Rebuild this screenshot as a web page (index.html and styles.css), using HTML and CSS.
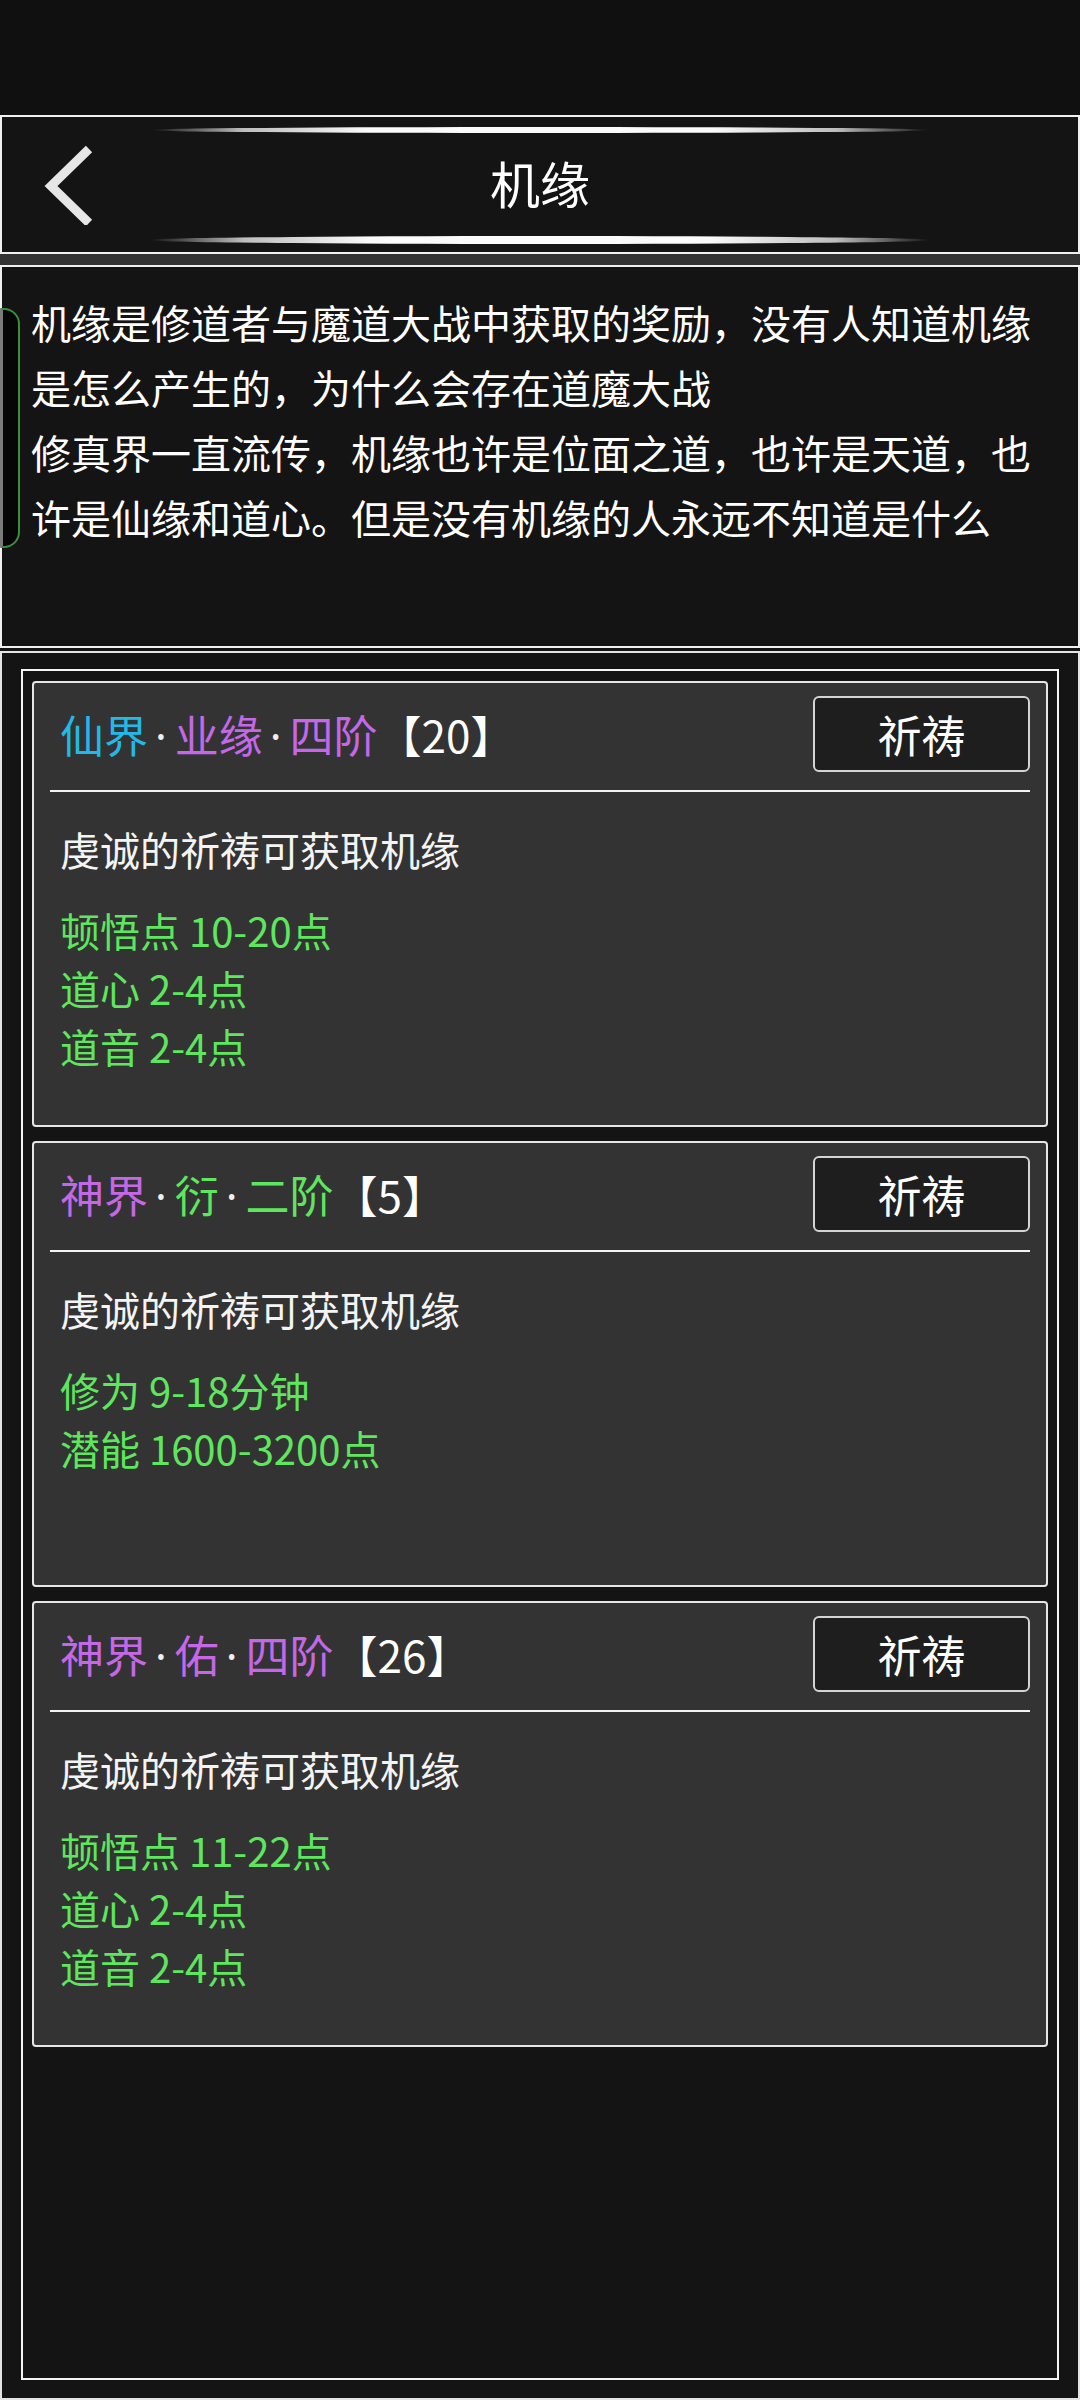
FILE: index.html
```html
<!DOCTYPE html>
<html lang="zh-CN">
<head>
    <meta charset="UTF-8">
    <meta name="viewport" content="width=device-width, initial-scale=1.0">
    <title>机缘</title>
    <link rel="stylesheet" href="styles.css">
</head>
<body>
    <div class="status-bar"></div>

    <header class="top-bar">
        <div class="glow glow-top"></div>
        <div class="bar-row">
            <svg class="back" width="56" height="80" viewBox="0 0 56 80">
                <polyline points="48,4 10,41 48,78" fill="none" stroke="#e6e6e6" stroke-width="9" stroke-linejoin="miter"/>
            </svg>
            <h1 class="bar-title">机缘</h1>
            <span></span>
        </div>
        <div class="glow glow-bottom"></div>
    </header>

    <div class="band"></div>

    <section class="intro">
        <span class="side-tab"></span>
        <p>机缘是修道者与魔道大战中获取的奖励，没有人知道机缘是怎么产生的，为什么会存在道魔大战<br>修真界一直流传，机缘也许是位面之道，也许是天道，也许是仙缘和道心。但是没有机缘的人永远不知道是什么</p>
    </section>

    <section class="panel">
        <div class="panel-inner">
            <div class="card">
                <div class="card-head">
                    <div class="card-title"><span class="c-cyan">仙界</span><span class="dot">·</span><span class="c-purple">业缘</span><span class="dot">·</span><span class="c-purple">四阶</span>【20】</div>
                    <button class="pray-btn">祈祷</button>
                </div>
                <div class="card-line"></div>
                <div class="card-desc">虔诚的祈祷可获取机缘</div>
                <ul class="rewards">
                    <li>顿悟点 10-20点</li>
                    <li>道心 2-4点</li>
                    <li>道音 2-4点</li>
                </ul>
            </div>

            <div class="card">
                <div class="card-head">
                    <div class="card-title"><span class="c-purple">神界</span><span class="dot">·</span><span class="c-green">衍</span><span class="dot">·</span><span class="c-green">二阶</span>【5】</div>
                    <button class="pray-btn">祈祷</button>
                </div>
                <div class="card-line"></div>
                <div class="card-desc">虔诚的祈祷可获取机缘</div>
                <ul class="rewards">
                    <li>修为 9-18分钟</li>
                    <li>潜能 1600-3200点</li>
                </ul>
            </div>

            <div class="card">
                <div class="card-head">
                    <div class="card-title"><span class="c-purple">神界</span><span class="dot">·</span><span class="c-purple">佑</span><span class="dot">·</span><span class="c-purple">四阶</span>【26】</div>
                    <button class="pray-btn">祈祷</button>
                </div>
                <div class="card-line"></div>
                <div class="card-desc">虔诚的祈祷可获取机缘</div>
                <ul class="rewards">
                    <li>顿悟点 11-22点</li>
                    <li>道心 2-4点</li>
                    <li>道音 2-4点</li>
                </ul>
            </div>
        </div>
    </section>
</body>
</html>
```

FILE: styles.css
```css
* {
    box-sizing: border-box;
}

body {
    margin: 0;
    width: 1080px;
    height: 2400px;
    overflow: hidden;
    background: #141414;
    color: #f2f2f2;
    font-family: 'Noto Sans CJK SC', 'Noto Sans', sans-serif;
}

.status-bar {
    height: 115px;
    background: #101010;
}

.top-bar {
    height: 139px;
    background: #141414;
    border: 2px solid #f0f0f0;
    padding-top: 10px;
}

.glow {
    width: 780px;
    margin: 0 auto;
    border-radius: 50%;
    background: linear-gradient(90deg, rgba(255,255,255,0) 0%, #bdbdbd 12%, #fafafa 28%, #fafafa 72%, #bdbdbd 88%, rgba(255,255,255,0) 100%);
}

.glow-top {
    height: 6px;
}

.glow-bottom {
    height: 8px;
}

.bar-row {
    height: 103px;
    display: grid;
    grid-template-columns: 1fr auto 1fr;
    align-items: center;
}

.back {
    margin-left: 39px;
    display: block;
}

.bar-title {
    margin: 0 0 5px;
    font-size: 50px;
    font-weight: normal;
    color: #fff;
    line-height: 1;
}

.band {
    height: 11px;
    background: #333;
}

.intro {
    position: relative;
    height: 383px;
    border: 2px solid #f0f0f0;
    padding: 23px 28px 0 29px;
}

.intro p {
    margin: 0;
    font-size: 40px;
    line-height: 65px;
    color: #fff;
}

.side-tab {
    position: absolute;
    left: -2px;
    top: 41px;
    width: 20px;
    height: 240px;
    background: #060606;
    border: 2px solid #3a8f3e;
    border-left: 3px solid #7b7b7b;
    border-radius: 0 16px 16px 0;
}

.panel {
    margin-top: 3px;
    height: 1749px;
    border: 2px solid #e4e4e4;
    padding: 16px 19px 18px;
}

.panel-inner {
    height: 100%;
    border: 2px solid #f4f4f4;
    padding: 10px 9px;
    display: flex;
    flex-direction: column;
    gap: 14px;
}

.card {
    height: 446px;
    background: #333333;
    border: 2px solid #e6e6e6;
    border-radius: 4px;
    padding: 13px 16px 0;
}

.card-head {
    display: flex;
    align-items: center;
    justify-content: space-between;
    height: 76px;
}

.card-title {
    padding-left: 10px;
    font-size: 44px;
    color: #fff;
    white-space: nowrap;
}

.dot {
    font-family: 'Noto Sans', sans-serif;
    color: #f0f0f0;
    padding: 0 8px 0 7px;
}

.c-cyan {
    color: #22b9e8;
}

.c-purple {
    color: #c468e8;
}

.c-green {
    color: #5ee65e;
}

.pray-btn {
    width: 217px;
    height: 76px;
    background: #1e1e1e;
    border: 2px solid #d4d4d4;
    border-radius: 6px;
    color: #fff;
    font-family: inherit;
    font-size: 44px;
    padding: 0;
}

.card-line {
    margin-top: 18px;
    height: 2px;
    background: #f4f4f4;
}

.card-desc {
    padding: 28px 10px 0;
    font-size: 40px;
    line-height: 58px;
    color: #f4f4f4;
}

.rewards {
    list-style: none;
    margin: 23px 0 0;
    padding: 0 10px;
    font-size: 40px;
    line-height: 58px;
    color: #5ee65e;
}
```
